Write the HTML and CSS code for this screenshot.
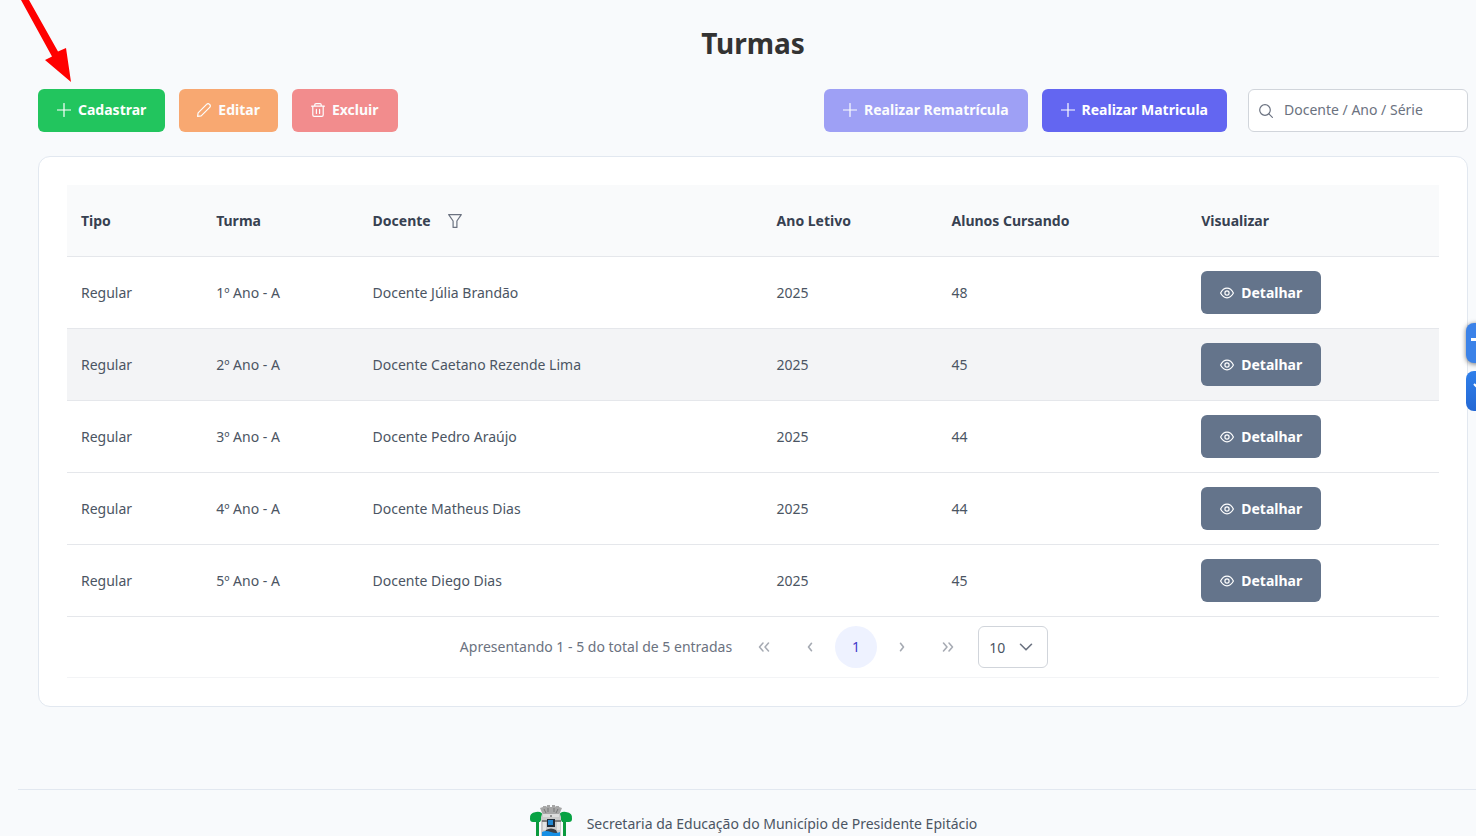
FILE: index.html
```html
<!DOCTYPE html>
<html lang="pt-BR">
<head>
<meta charset="utf-8">
<meta name="viewport" content="width=device-width, initial-scale=1">
<title>Turmas</title>
<link rel="stylesheet" href="styles.css">
</head>
<body>
<svg class="defs" aria-hidden="true">
  <symbol id="plus" viewBox="0 0 14 14"><path d="M7 .5v13M.5 7h13" fill="none" stroke="currentColor" stroke-width="1.2" stroke-linecap="round"/></symbol>
  <symbol id="pencil" viewBox="0 0 14 14"><path d="M.6 13.4l.5-3.6 8.5-8.500a2 2 0 0 1 2.900 0l.2.2a2 2 0 0 1 0 2.900l-8.500 8.500z" fill="none" stroke="currentColor" stroke-width="1.200" stroke-linejoin="round"/></symbol>
  <symbol id="trash" viewBox="0 0 14 14"><path d="M.6 3.200h12.800M1.800 3.200v8.900q0 1.300 1.400 1.300h7.600q1.400 0 1.400-1.300V3.200M3.800 3V1.800Q3.800.6 5 .6h4q1.200 0 1.200 1.200V3M5.400 6.400v4M8.600 6.400v4" fill="none" stroke="currentColor" stroke-width="1.200" stroke-linecap="round"/></symbol>
  <symbol id="search" viewBox="0 0 14 14"><circle cx="6" cy="6" r="5.300" fill="none" stroke="currentColor" stroke-width="1.200"/><path d="M9.900 9.900l3.500 3.500" stroke="currentColor" stroke-width="1.200" stroke-linecap="round"/></symbol>
  <symbol id="filter" viewBox="0 0 14 14"><path d="M.7.6h12.600L8.900 7v6.400H5.100V7z" fill="none" stroke="currentColor" stroke-width="1.200" stroke-linejoin="round"/></symbol>
  <symbol id="eye" viewBox="0 0 14 14"><path d="M.6 7Q3 2.200 7 2.200T13.400 7Q11 11.800 7 11.800T.6 7z" fill="none" stroke="currentColor" stroke-width="1.200" stroke-linejoin="round"/><circle cx="7" cy="7" r="2.100" fill="none" stroke="currentColor" stroke-width="1.200"/></symbol>
  <symbol id="left" viewBox="0 0 14 14"><path d="M8.500 3.300L5.500 7l3 3.700" fill="none" stroke="currentColor" stroke-width="1.600" stroke-linecap="round" stroke-linejoin="round"/></symbol>
  <symbol id="right" viewBox="0 0 14 14"><path d="M5.500 3.300l3 3.700-3 3.700" fill="none" stroke="currentColor" stroke-width="1.600" stroke-linecap="round" stroke-linejoin="round"/></symbol>
  <symbol id="first" viewBox="0 0 14 14"><path d="M6 3L2.500 7 6 11M11.500 3L8 7l3.500 4" fill="none" stroke="currentColor" stroke-width="1.500" stroke-linecap="round" stroke-linejoin="round"/></symbol>
  <symbol id="last" viewBox="0 0 14 14"><path d="M2.500 3L6 7l-3.500 4M8 3l3.500 4L8 11" fill="none" stroke="currentColor" stroke-width="1.500" stroke-linecap="round" stroke-linejoin="round"/></symbol>
  <symbol id="down" viewBox="0 0 14 14"><path d="M1.500 4.300L7 9.800l5.500-5.500" fill="none" stroke="currentColor" stroke-width="1.600" stroke-linecap="round" stroke-linejoin="round"/></symbol>
</svg>

<main class="main">
  <h1 class="title">Turmas</h1>

  <div class="toolbar">
    <div class="group">
      <button class="btn success" type="button"><svg class="icon"><use href="#plus"/></svg>Cadastrar</button>
      <button class="btn warning" type="button" disabled><svg class="icon"><use href="#pencil"/></svg>Editar</button>
      <button class="btn danger" type="button" disabled><svg class="icon"><use href="#trash"/></svg>Excluir</button>
    </div>
    <div class="group end">
      <button class="btn primary" type="button" disabled><svg class="icon"><use href="#plus"/></svg>Realizar Rematrícula</button>
      <button class="btn primary" type="button"><svg class="icon"><use href="#plus"/></svg>Realizar Matricula</button>
      <label class="search">
        <svg class="icon"><use href="#search"/></svg>
        <input class="search-input" type="text" placeholder="Docente / Ano / Série" aria-label="Buscar turma">
      </label>
    </div>
  </div>

  <section class="card">
    <table class="table">
      <colgroup><col class="c-type"><col class="c-class"><col class="c-teacher"><col class="c-year"><col class="c-students"><col></colgroup>
      <thead>
        <tr>
          <th scope="col">Tipo</th>
          <th scope="col">Turma</th>
          <th scope="col"><div class="head">Docente <button class="filter" type="button" aria-label="Filtrar docente"><svg class="icon"><use href="#filter"/></svg></button></div></th>
          <th scope="col">Ano Letivo</th>
          <th scope="col">Alunos Cursando</th>
          <th scope="col">Visualizar</th>
        </tr>
      </thead>
      <tbody>
        <tr><td>Regular</td><td>1º Ano - A</td><td>Docente Júlia Brandão</td><td>2025</td><td>48</td><td><button class="btn secondary" type="button"><svg class="icon"><use href="#eye"/></svg>Detalhar</button></td></tr>
        <tr class="active"><td>Regular</td><td>2º Ano - A</td><td>Docente Caetano Rezende Lima</td><td>2025</td><td>45</td><td><button class="btn secondary" type="button"><svg class="icon"><use href="#eye"/></svg>Detalhar</button></td></tr>
        <tr><td>Regular</td><td>3º Ano - A</td><td>Docente Pedro Araújo</td><td>2025</td><td>44</td><td><button class="btn secondary" type="button"><svg class="icon"><use href="#eye"/></svg>Detalhar</button></td></tr>
        <tr><td>Regular</td><td>4º Ano - A</td><td>Docente Matheus Dias</td><td>2025</td><td>44</td><td><button class="btn secondary" type="button"><svg class="icon"><use href="#eye"/></svg>Detalhar</button></td></tr>
        <tr><td>Regular</td><td>5º Ano - A</td><td>Docente Diego Dias</td><td>2025</td><td>45</td><td><button class="btn secondary" type="button"><svg class="icon"><use href="#eye"/></svg>Detalhar</button></td></tr>
      </tbody>
    </table>
    <nav class="paginator" aria-label="Paginação">
      <span class="report">Apresentando 1 - 5 do total de 5 entradas</span>
      <div class="pages">
        <button class="page" type="button" disabled aria-label="Primeira página"><svg class="icon"><use href="#first"/></svg></button>
        <button class="page" type="button" disabled aria-label="Página anterior"><svg class="icon"><use href="#left"/></svg></button>
        <button class="page current" type="button" aria-current="page">1</button>
        <button class="page" type="button" disabled aria-label="Próxima página"><svg class="icon"><use href="#right"/></svg></button>
        <button class="page" type="button" disabled aria-label="Última página"><svg class="icon"><use href="#last"/></svg></button>
      </div>
      <div class="rows">
        <select class="rows-select" aria-label="Linhas por página"><option>10</option><option>20</option><option>50</option></select>
        <svg class="icon"><use href="#down"/></svg>
      </div>
    </nav>
  </section>
</main>

<footer class="footer">
  <svg class="crest" viewBox="0 0 44 50" role="img" aria-label="Brasão de Presidente Epitácio">
    <path d="M7 16h3v34H7zM34 16h3v34h-3z" fill="#0b9a3e"/>
    <path d="M1 15q-1-6 6-7 6-1 7 4l-3 6H4q-3 0-3-3zM43 15q1-6-6-7-6-1-7 4l3 6h7q3 0 3-3z" fill="#07a243"/>
    <path d="M11 4l3-1V2h3l1 1V1h3v2h2V1h3v2l1-1h3v1l3 1-3 7H14z" fill="#a6a6a6"/>
    <path d="M15 5l2 4M19 4v4M25 4v4M29 5l-2 4" stroke="#777"/>
    <path d="M13 10h18l1 3v37H12V13z" fill="#c9c9c9"/>
    <path d="M14 10h16v3H14z" fill="#ddd"/>
    <circle cx="22" cy="12" r="1" fill="#777"/>
    <path d="M13 17h5M26 17h6" stroke="#333" stroke-width="1"/>
    <path d="M14 18h3v8h-3zM28 18h3v8h-3z" fill="#e4e4e4"/>
    <path d="M18 15h8v8h-8z" fill="#202b38"/>
    <path d="M19 16h5v5h-5z" fill="#2186d0"/>
    <path d="M17 26q5-3 10 0l2 4H15z" fill="#3c4148"/>
    <path d="M13 28q4-2 9 0t9 0v22H13z" fill="#168fe5"/>
  </svg>
  <span>Secretaria da Educação do Município de Presidente Epitácio</span>
</footer>

<div class="dock">
  <button class="dock-btn raised" type="button" aria-label="Libras"><svg viewBox="0 0 40 40"><path d="M5 15h30v3H5z" fill="#fff"/></svg></button>
  <button class="dock-btn deep" type="button" aria-label="Acessibilidade"><svg viewBox="0 0 40 40"><path d="M8 13l5 5" stroke="#fff" stroke-width="2"/></svg></button>
</div>

<svg class="arrow" viewBox="0 0 80 84" aria-hidden="true"><path d="M21 0h8l29 51.500 8-3.500 5 34-26-22 7-3.500z" fill="#f00"/></svg>
</body>
</html>
```
FILE: styles.css
```css
* { box-sizing: border-box; }

body {
  position: relative;
  height: 100vh;
  margin: 0;
  overflow: hidden;
  background: #f8fafc;
  color: #4b5563;
  font: 14px/21px "Noto Sans", sans-serif;
}

button, input, select { font: inherit; }

.defs { position: absolute; width: 0; height: 0; }
.icon { flex: none; width: 14px; height: 14px; }

.main { padding: 24px 8px 0 38px; }

.title {
  margin: 0 0 27px;
  color: #333;
  font-size: 28px;
  line-height: 38px;
  text-align: center;
}

.toolbar {
  display: flex;
  justify-content: space-between;
  margin-bottom: 24px;
}

.group { display: flex; gap: 14px; }

.btn {
  display: inline-flex;
  align-items: center;
  gap: 7px;
  height: 43px;
  padding: 0 18px;
  border: 1px solid transparent;
  border-radius: 6px;
  color: #fff;
  font-weight: 700;
  white-space: nowrap;
  vertical-align: middle;
}
.toolbar .btn { padding-bottom: 2px; }
.btn:disabled { opacity: 0.6; }
.success { background: #22c55e; }
.warning { padding: 0 17px; background: #f97316; }
.danger { background: #ef4444; }
.primary { background: #6366f1; }
.secondary { background: #64748b; }

.search { position: relative; margin-left: 7px; color: #6b7280; }
.search .icon { position: absolute; top: 15px; left: 11px; }
.search-input {
  width: 220px;
  height: 43px;
  padding: 0 11px 2px 35px;
  border: 1px solid #d1d5db;
  border-radius: 6px;
  background: #fff;
  color: #4b5563;
}
.search-input::placeholder { color: #6b7280; opacity: 1; }

.card {
  padding: 28px;
  border: 1px solid #e2e8f0;
  border-radius: 12px;
  background: #fff;
}

.table {
  width: 100%;
  border-spacing: 0;
  table-layout: fixed;
}
.c-type { width: 9.85%; }
.c-class { width: 11.4%; }
.c-teacher { width: 29.45%; }
.c-year { width: 12.75%; }
.c-students { width: 18.2%; }

.table th, .table td {
  height: 72px;
  padding: 14px;
  border-bottom: 1px solid #e5e7eb;
  text-align: left;
}
.table th { background: #f9fafb; color: #374151; }
.active { background: #f3f4f6; }

.head { display: flex; align-items: center; gap: 10px; }
.filter {
  display: flex;
  padding: 7px;
  border: 0;
  background: none;
  color: #6b7280;
}

.paginator {
  display: flex;
  align-items: center;
  justify-content: center;
  gap: 9px;
  height: 61px;
  padding-left: 2px;
  border-bottom: 1px solid #f3f4f6;
  color: #6b7280;
}
.report { padding-bottom: 2px; }
.pages { display: flex; gap: 4px; padding-left: 2px; }
.page {
  display: flex;
  align-items: center;
  justify-content: center;
  width: 42px;
  height: 42px;
  padding: 0;
  border: 0;
  border-radius: 50%;
  background: none;
  color: #6b7280;
}
.page:disabled { opacity: 0.6; }
.current { padding-bottom: 1px; background: #eef2ff; color: #4338ca; }

.rows { position: relative; }
.rows-select {
  display: block;
  width: 70px;
  height: 42px;
  padding: 0 10px;
  border: 1px solid #d1d5db;
  border-radius: 6px;
  appearance: none;
  background: #fff;
  color: #4b5563;
}
.rows .icon { position: absolute; top: 14px; right: 15px; pointer-events: none; }

.footer {
  display: flex;
  justify-content: center;
  gap: 14px;
  margin: 82px 0 0 18px;
  padding: 14px 0 0 12px;
  border-top: 1px solid #e2e8f0;
  line-height: 40px;
}
.crest { width: 44px; height: 50px; }

.dock {
  position: absolute;
  top: 323px;
  right: -30px;
  display: grid;
  gap: 8px;
}
.dock-btn {
  width: 40px;
  height: 40px;
  padding: 0;
  border: 0;
  border-radius: 8px;
}
.raised { background: #3b82e8; box-shadow: 0 1px 5px #0008; }
.deep { background: linear-gradient(#2f7fea, #2468d4); }

.arrow {
  position: absolute;
  top: 0;
  left: 0;
  width: 80px;
  height: 84px;
  pointer-events: none;
}
```
